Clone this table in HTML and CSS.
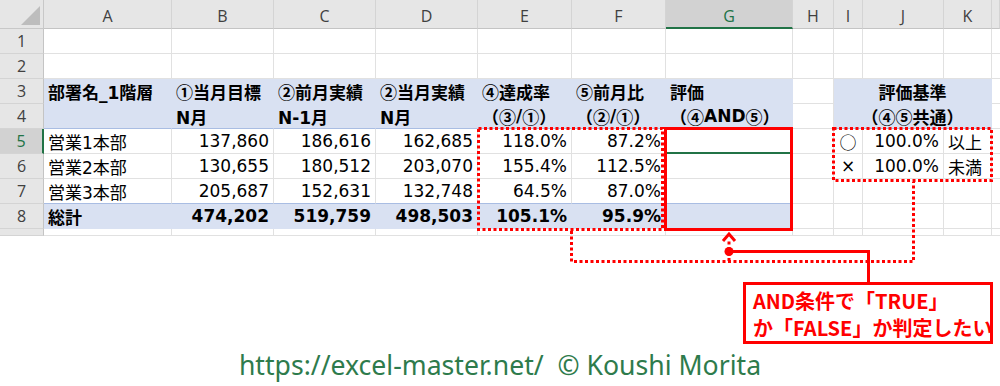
FILE: index.html
```html
<!DOCTYPE html>
<html lang="ja">
<head>
<meta charset="utf-8">
<title>AND条件</title>
<link rel="stylesheet" href="styles.css">
</head>
<body>
<div class="page">
  <div class="sheet">
    <!-- column headers -->
    <div class="corner"><svg class="tri" width="22" height="22" viewBox="0 0 22 22"><polygon points="1,20 20,20 20,1" fill="#bdbdbd"/></svg></div>
    <div class="ch">A</div><div class="ch">B</div><div class="ch">C</div><div class="ch">D</div><div class="ch">E</div><div class="ch">F</div><div class="ch sel">G</div><div class="ch">H</div><div class="ch">I</div><div class="ch">J</div><div class="ch">K</div><div class="ch"></div>

    <!-- row 1 -->
    <div class="rh">1</div>
    <div class="c"></div><div class="c"></div><div class="c"></div><div class="c"></div><div class="c"></div><div class="c"></div><div class="c"></div><div class="c"></div><div class="c"></div><div class="c"></div><div class="c"></div><div class="c"></div>

    <!-- row 2 -->
    <div class="rh">2</div>
    <div class="c"></div><div class="c"></div><div class="c"></div><div class="c"></div><div class="c"></div><div class="c"></div><div class="c"></div><div class="c"></div><div class="c"></div><div class="c"></div><div class="c"></div><div class="c"></div>

    <!-- row 3 -->
    <div class="rh">3</div>
    <div class="c f b">部署名_1階層</div>
    <div class="c f b"><span class="j">①</span>当月目標</div>
    <div class="c f b"><span class="j">②</span>前月実績</div>
    <div class="c f b"><span class="j">②</span>当月実績</div>
    <div class="c f b"><span class="j">④</span>達成率</div>
    <div class="c f b"><span class="j">⑤</span>前月比</div>
    <div class="c f b">評価</div>
    <div class="c"></div>
    <div class="c f b ctr span3">評価基準</div>
    <div class="c"></div>

    <!-- row 4 -->
    <div class="rh">4</div>
    <div class="c f hb"></div>
    <div class="c f hb b">N月</div>
    <div class="c f hb b">N-1月</div>
    <div class="c f hb b">N月</div>
    <div class="c f hb b"><span class="j">（③</span>/<span class="j">①）</span></div>
    <div class="c f hb b"><span class="j">（②</span>/<span class="j">①）</span></div>
    <div class="c f hb b"><span class="j">（④</span>AND<span class="j">⑤）</span></div>
    <div class="c"></div>
    <div class="c f hb b ctr span3"><span class="j">（④⑤共通）</span></div>
    <div class="c"></div>

    <!-- row 5 -->
    <div class="rh sel">5</div>
    <div class="c">営業1本部</div>
    <div class="c r">137,860</div>
    <div class="c r">186,616</div>
    <div class="c r">162,685</div>
    <div class="c r">118.0%</div>
    <div class="c r">87.2%</div>
    <div class="c active"></div>
    <div class="c"></div>
    <div class="c ctr"><span class="j">○</span></div>
    <div class="c r">100.0%</div>
    <div class="c">以上</div>
    <div class="c"></div>

    <!-- row 6 -->
    <div class="rh">6</div>
    <div class="c">営業2本部</div>
    <div class="c r">130,655</div>
    <div class="c r">180,512</div>
    <div class="c r">203,070</div>
    <div class="c r">155.4%</div>
    <div class="c r">112.5%</div>
    <div class="c"></div>
    <div class="c"></div>
    <div class="c ctr">×</div>
    <div class="c r">100.0%</div>
    <div class="c">未満</div>
    <div class="c"></div>

    <!-- row 7 -->
    <div class="rh">7</div>
    <div class="c hb">営業3本部</div>
    <div class="c r hb">205,687</div>
    <div class="c r hb">152,631</div>
    <div class="c r hb">132,748</div>
    <div class="c r hb">64.5%</div>
    <div class="c r hb">87.0%</div>
    <div class="c hb"></div>
    <div class="c"></div>
    <div class="c"></div>
    <div class="c"></div>
    <div class="c"></div>
    <div class="c"></div>

    <!-- row 8 -->
    <div class="rh">8</div>
    <div class="c f b">総計</div>
    <div class="c f b r">474,202</div>
    <div class="c f b r">519,759</div>
    <div class="c f b r">498,503</div>
    <div class="c f b r">105.1%</div>
    <div class="c f b r">95.9%</div>
    <div class="c f"></div>
    <div class="c"></div>
    <div class="c"></div>
    <div class="c"></div>
    <div class="c"></div>
    <div class="c"></div>

    <!-- row 9 (partial) -->
    <div class="rh"></div>
    <div class="c"></div><div class="c"></div><div class="c"></div><div class="c"></div><div class="c"></div><div class="c"></div><div class="c"></div><div class="c"></div><div class="c"></div><div class="c"></div><div class="c"></div><div class="c"></div>
  </div>

  <div class="footer">https://excel-master.net/&nbsp; © Koushi Morita</div>

  <svg class="marks" width="1000" height="386" viewBox="0 0 1000 386">
    <g fill="none" stroke="#ff0000" stroke-width="3">
      <rect x="478.5" y="128.5" width="184" height="101" stroke-dasharray="3 2.5"/>
      <rect x="833.5" y="128.5" width="158" height="52" stroke-dasharray="3 2.5"/>
      <path d="M571.5 231 V261.5 H913.5 V182" stroke-dasharray="3 2.5"/>
      <path d="M729 261 V240" stroke-dasharray="3 2.5"/>
      <rect x="665.5" y="128.5" width="126" height="101"/>
      <path d="M723 241 L729 234 L735 241"/>
      <path d="M729 251.5 H868.5 V283"/>
    </g>
    <circle cx="729" cy="251.5" r="4.5" fill="#ff0000"/>
  </svg>

  <div class="callout">AND条件で「TRUE」<br>か「FALSE」か判定したい</div>
</div>
</body>
</html>
```

FILE: styles.css
```css
* {
  box-sizing: border-box;
}

html,
body {
  margin: 0;
  padding: 0;
  background: #ffffff;
}

.page {
  position: relative;
  width: 1000px;
  height: 386px;
  overflow: hidden;
  font-family: "DejaVu Sans", "Noto Sans CJK JP", sans-serif;
}

.sheet {
  display: grid;
  grid-template-columns: 44px 128px 102px 102px 102px 94px 94px 127px 41px 29px 81px 48px 8px;
  grid-template-rows: 29px repeat(8, 25px) 7px;
  font-size: 17px;
  color: #000000;
}

.j {
  font-family: "Noto Sans CJK JP", sans-serif;
}

/* headers */
.corner {
  background: #e6e6e6;
  border-right: 1px solid #c8c8c8;
  border-bottom: 1px solid #c8c8c8;
  display: flex;
  align-items: flex-end;
  justify-content: flex-end;
  padding: 0 1px 1px 0;
}

.tri {
  display: block;
}

.ch {
  background: #e6e6e6;
  border-right: 1px solid #d4d4d4;
  border-bottom: 1px solid #c4c4c4;
  display: flex;
  align-items: center;
  justify-content: center;
  padding-top: 4px;
  font-family: "Open Sans", "Noto Sans", sans-serif;
  font-size: 16px;
  color: #404040;
}

.ch.sel {
  background: #d2d2d2;
  color: #217346;
  border-bottom: 2px solid #217346;
}

.rh {
  background: #e6e6e6;
  border-right: 1px solid #c4c4c4;
  border-bottom: 1px solid #d4d4d4;
  display: flex;
  align-items: center;
  justify-content: center;
  font-family: "Open Sans", "Noto Sans", sans-serif;
  font-size: 16px;
  color: #404040;
}

.rh.sel {
  background: #d2d2d2;
  color: #217346;
  border-right: 2px solid #217346;
}

/* cells */
.c {
  border-right: 1px solid #e1e1e1;
  border-bottom: 1px solid #e1e1e1;
  display: flex;
  align-items: center;
  padding: 0 4px;
  white-space: nowrap;
  min-width: 0;
}

.c.f {
  background: #d9e1f2;
  border-right-color: #d9e1f2;
  border-bottom-color: #d9e1f2;
}

.c.hb {
  border-bottom-color: #a9bde3;
}

.c.b {
  font-weight: 700;
}

.c.r {
  justify-content: flex-end;
  padding-right: 4px;
}

.c.ctr {
  justify-content: center;
}

.span3 {
  grid-column: span 3;
}

.c.active {
  position: relative;
}

.c.active::after {
  content: "";
  position: absolute;
  left: 0;
  right: 0;
  bottom: -1px;
  height: 2px;
  background: #217346;
}

/* footer */
.footer {
  margin-top: 113px;
  height: 32px;
  line-height: 32px;
  text-align: center;
  font-family: "Noto Sans", sans-serif;
  font-size: 26.6px;
  color: #2e7b4c;
}

/* overlay marks */
.marks {
  position: absolute;
  left: 0;
  top: 0;
  pointer-events: none;
}

.callout {
  position: absolute;
  left: 743px;
  top: 282px;
  width: 250px;
  height: 62px;
  border: 3px solid #ff0000;
  background: #ffffff;
  padding: 2px 0 0 7px;
  font-family: "Noto Sans CJK JP", sans-serif;
  font-weight: 700;
  font-size: 20px;
  line-height: 27px;
  color: #ff0000;
  white-space: nowrap;
}
```
